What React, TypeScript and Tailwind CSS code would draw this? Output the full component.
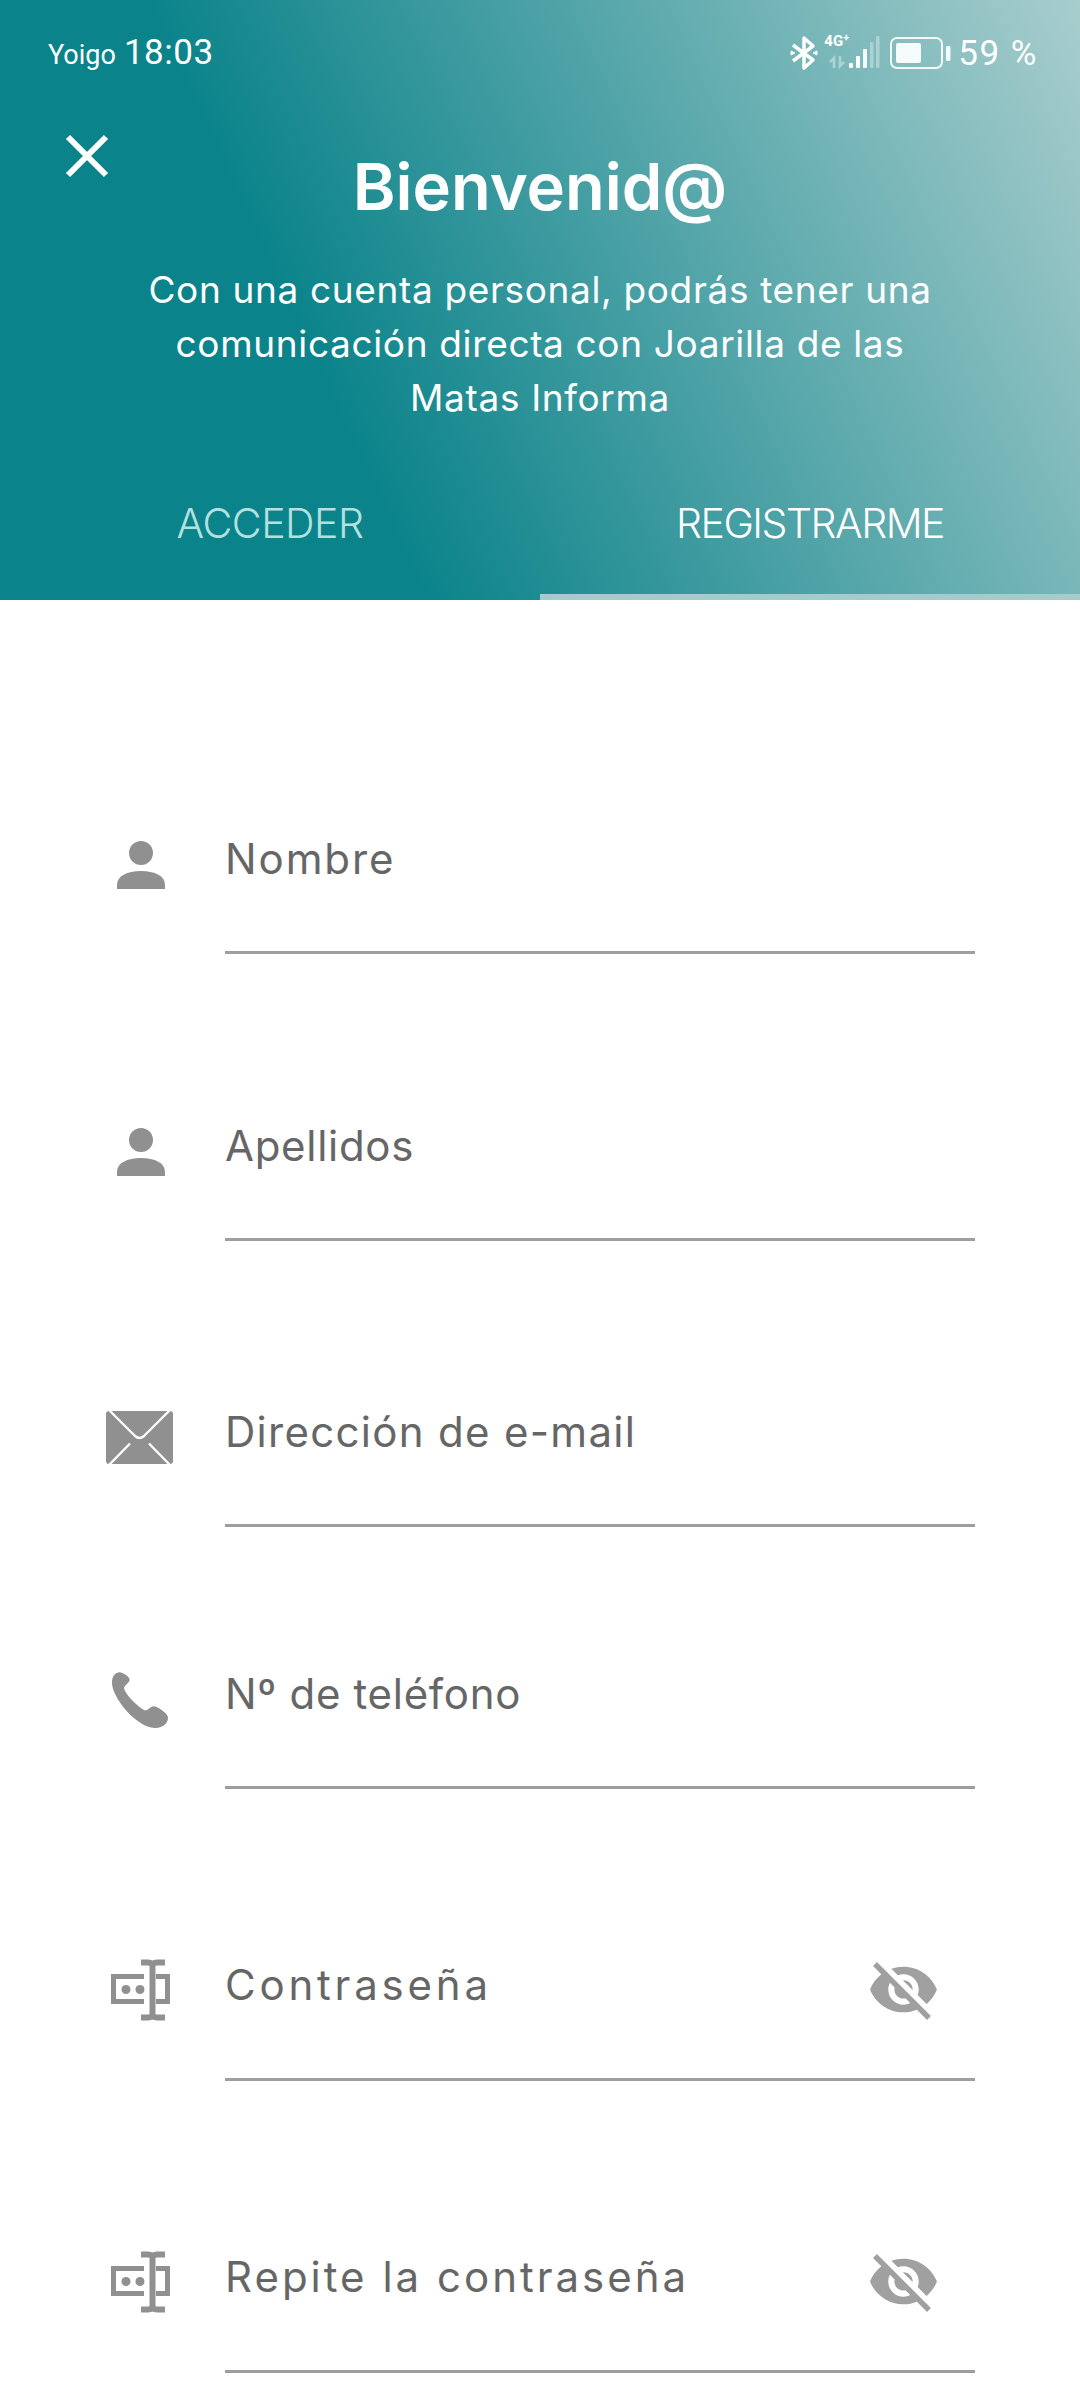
const font = { fontFamily: '"Inter", "Noto Sans", sans-serif' };

function Person() {
  return (
    <svg width="120" height="80" viewBox="0 0 120 80" fill="#909090">
      <circle cx="61" cy="30" r="12" />
      <path d="M37 66 V62 C37 53 47 48 61 48 C75 48 85 53 85 62 V66 Z" />
    </svg>
  );
}

function Mail() {
  return (
    <svg width="120" height="80" viewBox="0 0 120 80">
      <rect x="26" y="15" width="67" height="53" rx="3" fill="#909090" />
      <path d="M29 14 L55 40 Q59.500 44 64 40 L90 14 M29 69 L50 47.500 M90 69 L69 47.500" stroke="#fff" strokeWidth="2.400" fill="none" />
    </svg>
  );
}

function Phone() {
  return (
    <svg width="120" height="80" viewBox="-32 -13 120 80" fill="#909090">
      <g transform="translate(0 1) scale(0.3333) translate(-97 -845)">
        <path d="M118 846 C105 848 96 860 97 880 C100 925 170 1010 225 1013 C250 1014 266 998 265 980 C262 968 232 948 222 948 C212 948 205 962 195 960 C175 950 140 915 133 895 C132 885 148 880 150 868 C148 858 128 845 118 846 Z" />
      </g>
    </svg>
  );
}

function PasswordIcon() {
  return (
    <svg width="120" height="80" viewBox="0 0 120 80" fill="none" stroke="#909090" strokeWidth="5">
      <path d="M64 26.500 H33.500 V51.500 H64" />
      <path d="M76 26.500 H87.500 V51.500 H76" />
      <path d="M72.500 13 V67" strokeWidth="6" />
      <path d="M61 12.500 H68 Q72.500 12.500 72.500 16 Q72.500 12.500 77 12.500 H85 M61 67.500 H68 Q72.500 67.500 72.500 64 Q72.500 67.500 77 67.500 H85" strokeWidth="6" />
      <circle cx="46" cy="39.500" r="4.500" fill="#909090" stroke="none" />
      <circle cx="60" cy="39.500" r="4.500" fill="#909090" stroke="none" />
    </svg>
  );
}

function EyeOff() {
  return (
    <svg width="67" height="58" viewBox="1 3 22 19" fill="#a0a0a0" className="mr-[38px] mt-[12px] shrink-0">
      <path d="M12 7c2.760 0 5 2.240 5 5 0 .650-.130 1.260-.360 1.830l2.920 2.920c1.510-1.260 2.700-2.890 3.430-4.750-1.730-4.390-6-7.500-11-7.500-1.400 0-2.740.250-3.980.700l2.160 2.160C10.740 7.130 11.350 7 12 7zM2 4.270l2.280 2.280.460.460C3.080 8.300 1.780 10.020 1 12c1.730 4.390 6 7.500 11 7.500 1.550 0 3.030-.300 4.380-.840l.420.420L19.730 22 21 20.730 3.270 3 2 4.270zM7.530 9.800l1.550 1.550c-.050.210-.080.430-.080.650 0 1.660 1.340 3 3 3 .220 0 .440-.030.650-.080l1.550 1.550c-.670.330-1.410.530-2.200.530-2.760 0-5-2.240-5-5 0-.790.200-1.530.530-2.200zm4.310-.780l3.150 3.150.020-.160c0-1.660-1.340-3-3-3l-.170.010z" />
    </svg>
  );
}

function Row({ mt, tracking, label, icon, eye }: { mt: string; tracking: string; label: string; icon: React.ReactNode; eye?: boolean }) {
  return (
    <div className={`flex h-[131px] items-start ${mt}`}>
      <div className="w-[225px] shrink-0 pl-[80px]">{icon}</div>
      <div className="mr-[105px] flex h-[131px] flex-1 items-start justify-between border-b-[3px] border-[#9e9e9e]">
        <span className={`text-[42px] text-[#666666] ${eye ? "leading-[70px]" : "leading-[72px]"} ${tracking}`} style={font}>{label}</span>
        {eye && <EyeOff />}
      </div>
    </div>
  );
}

function StatusIcons() {
  return (
    <div className="flex items-center">
      <svg width="28" height="36" viewBox="0 0 28 36" fill="none" stroke="#fff" strokeWidth="3.500" className="mr-[6px]">
        <path d="M3 10 L23 25 L14 33 V3 L23 11 L3 26" strokeLinejoin="round" />
        <path d="M1 16 L5 18 L1 20 Z M27 16 L23 18 L27 20 Z" fill="#fff" strokeWidth="1" />
      </svg>
      <div className="relative mr-[10px] h-[34px] w-[56px]">
        <span className="absolute left-0 top-[-4px] text-[15px] font-bold leading-[18px] text-white" style={{ fontFamily: '"Liberation Sans Narrow", "Roboto", sans-serif' }}>4G<sup className="text-[11px]">+</sup></span>
        <svg width="56" height="34" viewBox="0 0 56 34" className="absolute left-0 top-0">
          <path d="M10 32 V22 L6 26 M16 20 V30 L20 26" stroke="#fff" strokeOpacity="0.400" strokeWidth="2.500" fill="none" />
          <rect x="25" y="27" width="4" height="5" rx="1" fill="#fff" />
          <rect x="32" y="20" width="4" height="12" rx="1" fill="#fff" />
          <rect x="39" y="13" width="4" height="19" rx="1" fill="#fff" fillOpacity="0.950" />
          <rect x="46" y="6" width="3.500" height="26" rx="1" fill="#fff" fillOpacity="0.350" />
          <rect x="52" y="0" width="3.500" height="32" rx="1" fill="#fff" fillOpacity="0.350" />
        </svg>
      </div>
      <svg width="61" height="32" viewBox="0 0 61 32" className="mr-[7px]">
        <rect x="1" y="1" width="51" height="30" rx="6" fill="none" stroke="#fff" strokeOpacity="0.900" strokeWidth="2" />
        <rect x="6" y="6" width="25" height="20" rx="2" fill="#f5fbfb" />
        <rect x="56" y="9" width="4.500" height="15" rx="1.500" fill="#fff" fillOpacity="0.900" />
      </svg>
      <span className="text-[35px] leading-none tracking-[1.500px] text-white" style={{ fontFamily: 'Roboto, sans-serif' }}>59 %</span>
    </div>
  );
}

export default function App() {
  return (
    <div className="h-[2400px] w-[1080px] overflow-hidden bg-white" style={font}>
      <header className="relative h-[600px] bg-[linear-gradient(65deg,#0a838a_31%,#a8cdcd_100%)] text-white">
        <div className="flex h-[104px] items-center justify-between pl-[48px] pr-[42px] pt-[2px]" style={{ fontFamily: 'Roboto, sans-serif' }}>
          <div className="flex items-baseline gap-[8px]">
            <span className="text-[27px]">Yoigo</span>
            <span className="text-[35px] tracking-[0.500px]">18:03</span>
          </div>
          <StatusIcons />
        </div>
        <svg width="44" height="44" viewBox="0 0 44 44" className="absolute left-[65px] top-[134px]" stroke="#fff" strokeWidth="6">
          <path d="M3 3 L41 41 M41 3 L3 41" />
        </svg>
        <h1 className="mt-[43px] text-center text-[65px] font-semibold leading-[80px]">Bienvenid@</h1>
        <p className="mt-[36px] text-center text-[37px] leading-[54px] tracking-[0.650px]">
          Con una cuenta personal, podrás tener una<br />comunicación directa con Joarilla de las<br />Matas Informa
        </p>
        <div className="flex h-[175px]">
          <div className="flex-1 border-b-[6px] border-transparent pt-[68px] text-center text-[41px] font-light leading-[60px] tracking-[-0.500px] text-[#b5e0e0]">ACCEDER</div>
          <div className="flex-1 border-b-[6px] border-[#a5cbcb] pt-[68px] text-center text-[41px] font-light leading-[60px] tracking-[-1.500px]">REGISTRARME</div>
        </div>
      </header>
      <main className="pt-[223px]">
        <Row mt="mt-0" tracking="tracking-[1.900px]" label="Nombre" icon={<Person />} />
        <Row mt="mt-[156px]" tracking="tracking-[0.700px]" label="Apellidos" icon={<Person />} />
        <Row mt="mt-[155px]" tracking="tracking-[1.300px]" label="Dirección de e-mail" icon={<Mail />} />
        <Row mt="mt-[131px]" tracking="tracking-[0.700px]" label="Nº de teléfono" icon={<Phone />} />
        <Row mt="mt-[161px]" tracking="tracking-[3.800px]" label="Contraseña" icon={<PasswordIcon />} eye />
        <Row mt="mt-[161px]" tracking="tracking-[3px]" label="Repite la contraseña" icon={<PasswordIcon />} eye />
      </main>
    </div>
  );
}
